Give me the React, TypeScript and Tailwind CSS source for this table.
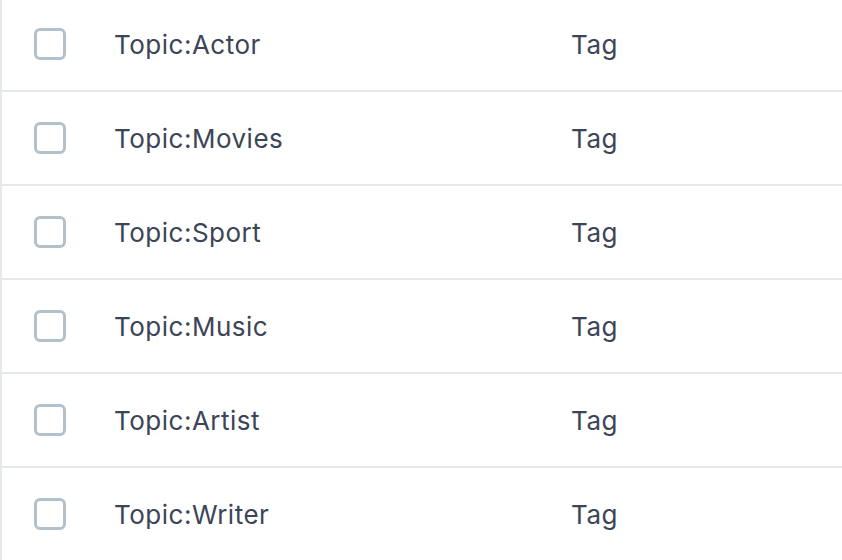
import React from "react";

const rows = ["Topic:Actor", "Topic:Movies", "Topic:Sport", "Topic:Music", "Topic:Artist", "Topic:Writer"];

export default function App() {
  return (
    <div className="w-[842px] h-[560px] overflow-hidden bg-white" style={{ fontFamily: "Inter, 'Noto Sans', sans-serif" }}>
      <div className="-mt-[2px] border-l-2 border-[#e5e8ec] min-h-[564px]">
        {rows.map((r) => (
          <div key={r} className="flex items-center h-[94px] border-b-2 border-[#e5e8ec]">
            <div className="w-[32px]" />
            <div className="w-[32px] h-[32px] rounded-[6px] border-[3px] border-[#b3c1cd]" />
            <div className="w-[48px]" />
            <div className="w-[457px] pt-[1px] text-[26px] tracking-[0.5px] text-[#3c4558]">{r}</div>
            <div className="pt-[1px] text-[26px] tracking-[0.5px] text-[#3c4558]">Tag</div>
          </div>
        ))}
      </div>
    </div>
  );
}
